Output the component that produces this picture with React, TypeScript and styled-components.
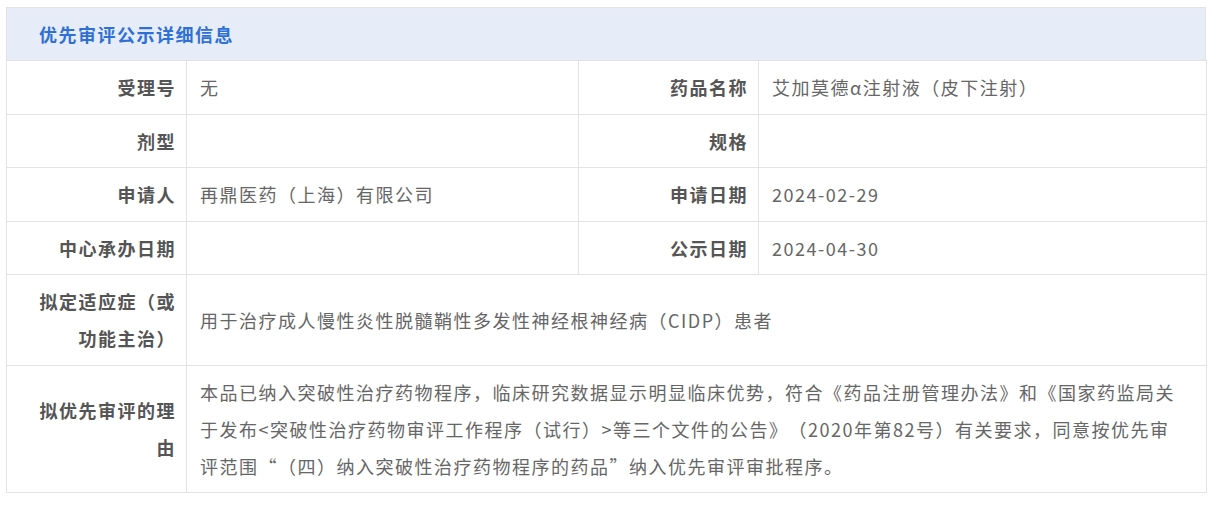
import styled, { createGlobalStyle } from 'styled-components'

const GlobalStyle = createGlobalStyle`
  body {
    margin: 0;
    background: #ffffff;
    font-family: "Noto Sans CJK SC", "Noto Sans", sans-serif;
    text-spacing-trim: space-all;
  }
`

const Page = styled.div`
  padding: 7px 12px 0 6px;
`

const Panel = styled.div`
  width: 1200px;
  box-sizing: border-box;
`

const Header = styled.div`
  height: 53px;
  box-sizing: border-box;
  display: flex;
  align-items: center;
  padding-left: 32px;
  background: #e6edf9;
  border: 1px solid #e3e3e3;
  border-bottom: none;
`

const Title = styled.h2`
  margin: 0;
  font-size: 18px;
  letter-spacing: 1.5px;
  font-weight: 700;
  color: #2f6fd6;
`

const Table = styled.table`
  width: 1200px;
  border-collapse: collapse;
  table-layout: fixed;
  font-size: 18px;
  letter-spacing: 1.5px;
  line-height: 37px;
`

const Cell = styled.td<{ $label?: boolean }>`
  border: 1px solid #e3e3e3;
  padding: 8px ${p => (p.$label ? '10px' : '22px')} 7.5px ${p => (p.$label ? '20px' : '13px')};
  vertical-align: middle;
  text-align: ${p => (p.$label ? 'right' : 'left')};
  font-weight: ${p => (p.$label ? 700 : 400)};
  color: ${p => (p.$label ? '#555555' : '#666666')};
  word-break: break-all;
`

type Pair = [string, string]

const rows: [Pair, Pair][] = [
  [['受理号', '无'], ['药品名称', '艾加莫德α注射液（皮下注射）']],
  [['剂型', ''], ['规格', '']],
  [['申请人', '再鼎医药（上海）有限公司'], ['申请日期', '2024-02-29']],
  [['中心承办日期', ''], ['公示日期', '2024-04-30']],
]

const wide: Pair[] = [
  ['拟定适应症（或功能主治）', '用于治疗成人慢性炎性脱髓鞘性多发性神经根神经病（CIDP）患者'],
  [
    '拟优先审评的理由',
    '本品已纳入突破性治疗药物程序，临床研究数据显示明显临床优势，符合《药品注册管理办法》和《国家药监局关于发布<突破性治疗药物审评工作程序（试行）>等三个文件的公告》（2020年第82号）有关要求，同意按优先审评范围“（四）纳入突破性治疗药物程序的药品”纳入优先审评审批程序。',
  ],
]

export default function App() {
  return (
    <>
      <GlobalStyle />
      <Page>
        <Panel>
          <Header>
            <Title>优先审评公示详细信息</Title>
          </Header>
          <Table>
            <colgroup>
              <col style={{ width: 180 }} />
              <col style={{ width: 392 }} />
              <col style={{ width: 180 }} />
              <col style={{ width: 448 }} />
            </colgroup>
            <tbody>
              {rows.map((r, i) => (
                <tr key={i}>
                  <Cell $label>{r[0][0]}</Cell>
                  <Cell>{r[0][1]}</Cell>
                  <Cell $label>{r[1][0]}</Cell>
                  <Cell>{r[1][1]}</Cell>
                </tr>
              ))}
              {wide.map((w, i) => (
                <tr key={'w' + i}>
                  <Cell $label>{w[0]}</Cell>
                  <Cell colSpan={3}>{w[1]}</Cell>
                </tr>
              ))}
            </tbody>
          </Table>
        </Panel>
      </Page>
    </>
  )
}
